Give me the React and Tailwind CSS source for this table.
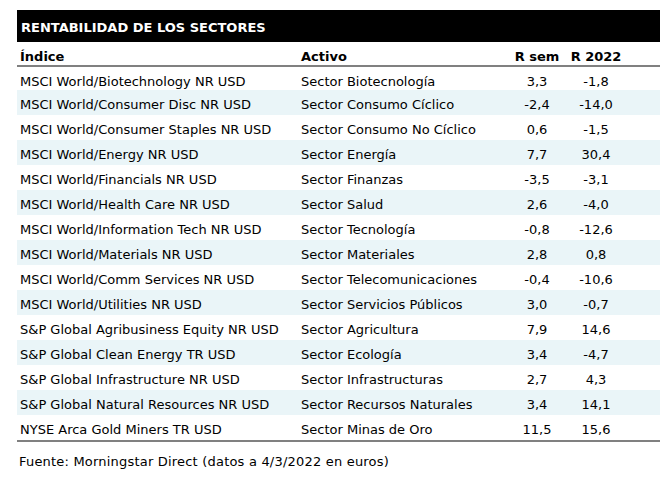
import React from "react";

const rows = [
  ["MSCI World/Biotechnology NR USD", "Sector Biotecnología", "3,3", "-1,8"],
  ["MSCI World/Consumer Disc NR USD", "Sector Consumo Cíclico", "-2,4", "-14,0"],
  ["MSCI World/Consumer Staples NR USD", "Sector Consumo No Cíclico", "0,6", "-1,5"],
  ["MSCI World/Energy NR USD", "Sector Energía", "7,7", "30,4"],
  ["MSCI World/Financials NR USD", "Sector Finanzas", "-3,5", "-3,1"],
  ["MSCI World/Health Care NR USD", "Sector Salud", "2,6", "-4,0"],
  ["MSCI World/Information Tech NR USD", "Sector Tecnología", "-0,8", "-12,6"],
  ["MSCI World/Materials NR USD", "Sector Materiales", "2,8", "0,8"],
  ["MSCI World/Comm Services NR USD", "Sector Telecomunicaciones", "-0,4", "-10,6"],
  ["MSCI World/Utilities NR USD", "Sector Servicios Públicos", "3,0", "-0,7"],
  ["S&P Global Agribusiness Equity NR USD", "Sector Agricultura", "7,9", "14,6"],
  ["S&P Global Clean Energy TR USD", "Sector Ecología", "3,4", "-4,7"],
  ["S&P Global Infrastructure NR USD", "Sector Infrastructuras", "2,7", "4,3"],
  ["S&P Global Natural Resources NR USD", "Sector Recursos Naturales", "3,4", "14,1"],
  ["NYSE Arca Gold Miners TR USD", "Sector Minas de Oro", "11,5", "15,6"],
];

const cols = "grid grid-cols-[281px_214px_50px_68px_1fr]";

export default function App() {
  return (
    <div className="w-[660px] h-[478px] bg-white pt-[10px] pl-[17px] text-black text-[13px] font-['Verdana','DejaVu_Sans',sans-serif]">
      {/* Title bar */}
      <div className="h-[32px] bg-black flex items-center pl-[4px] pt-[3px]">
        <span className="text-white font-bold">RENTABILIDAD DE LOS SECTORES</span>
      </div>

      {/* Header */}
      <div className={`${cols} h-[25px] items-center pt-[5px] font-bold border-b-2 border-[#808080]`}>
        <div className="pl-[3px]">Índice</div>
        <div className="pl-[3px]">Activo</div>
        <div className="text-center">R sem</div>
        <div className="text-center">R 2022</div>
        <div />
      </div>

      {/* Rows */}
      <div className="border-b-2 border-[#808080]">
        {rows.map((r, i) => (
          <div
            key={i}
            className={`${cols} items-center pt-[5px] ${i === 0 ? "h-[23px]" : "h-[25px]"} ${i % 2 === 1 ? "bg-[#eaf5f8]" : ""}`}
          >
            <div className="pl-[3px] whitespace-nowrap">{r[0]}</div>
            <div className="pl-[3px] whitespace-nowrap">{r[1]}</div>
            <div className="text-center">{r[2]}</div>
            <div className="text-center">{r[3]}</div>
            <div />
          </div>
        ))}
      </div>

      <div className="pl-[2px] pt-[10px] tracking-[0.2px]">Fuente: Morningstar Direct (datos a 4/3/2022 en euros)</div>
    </div>
  );
}
